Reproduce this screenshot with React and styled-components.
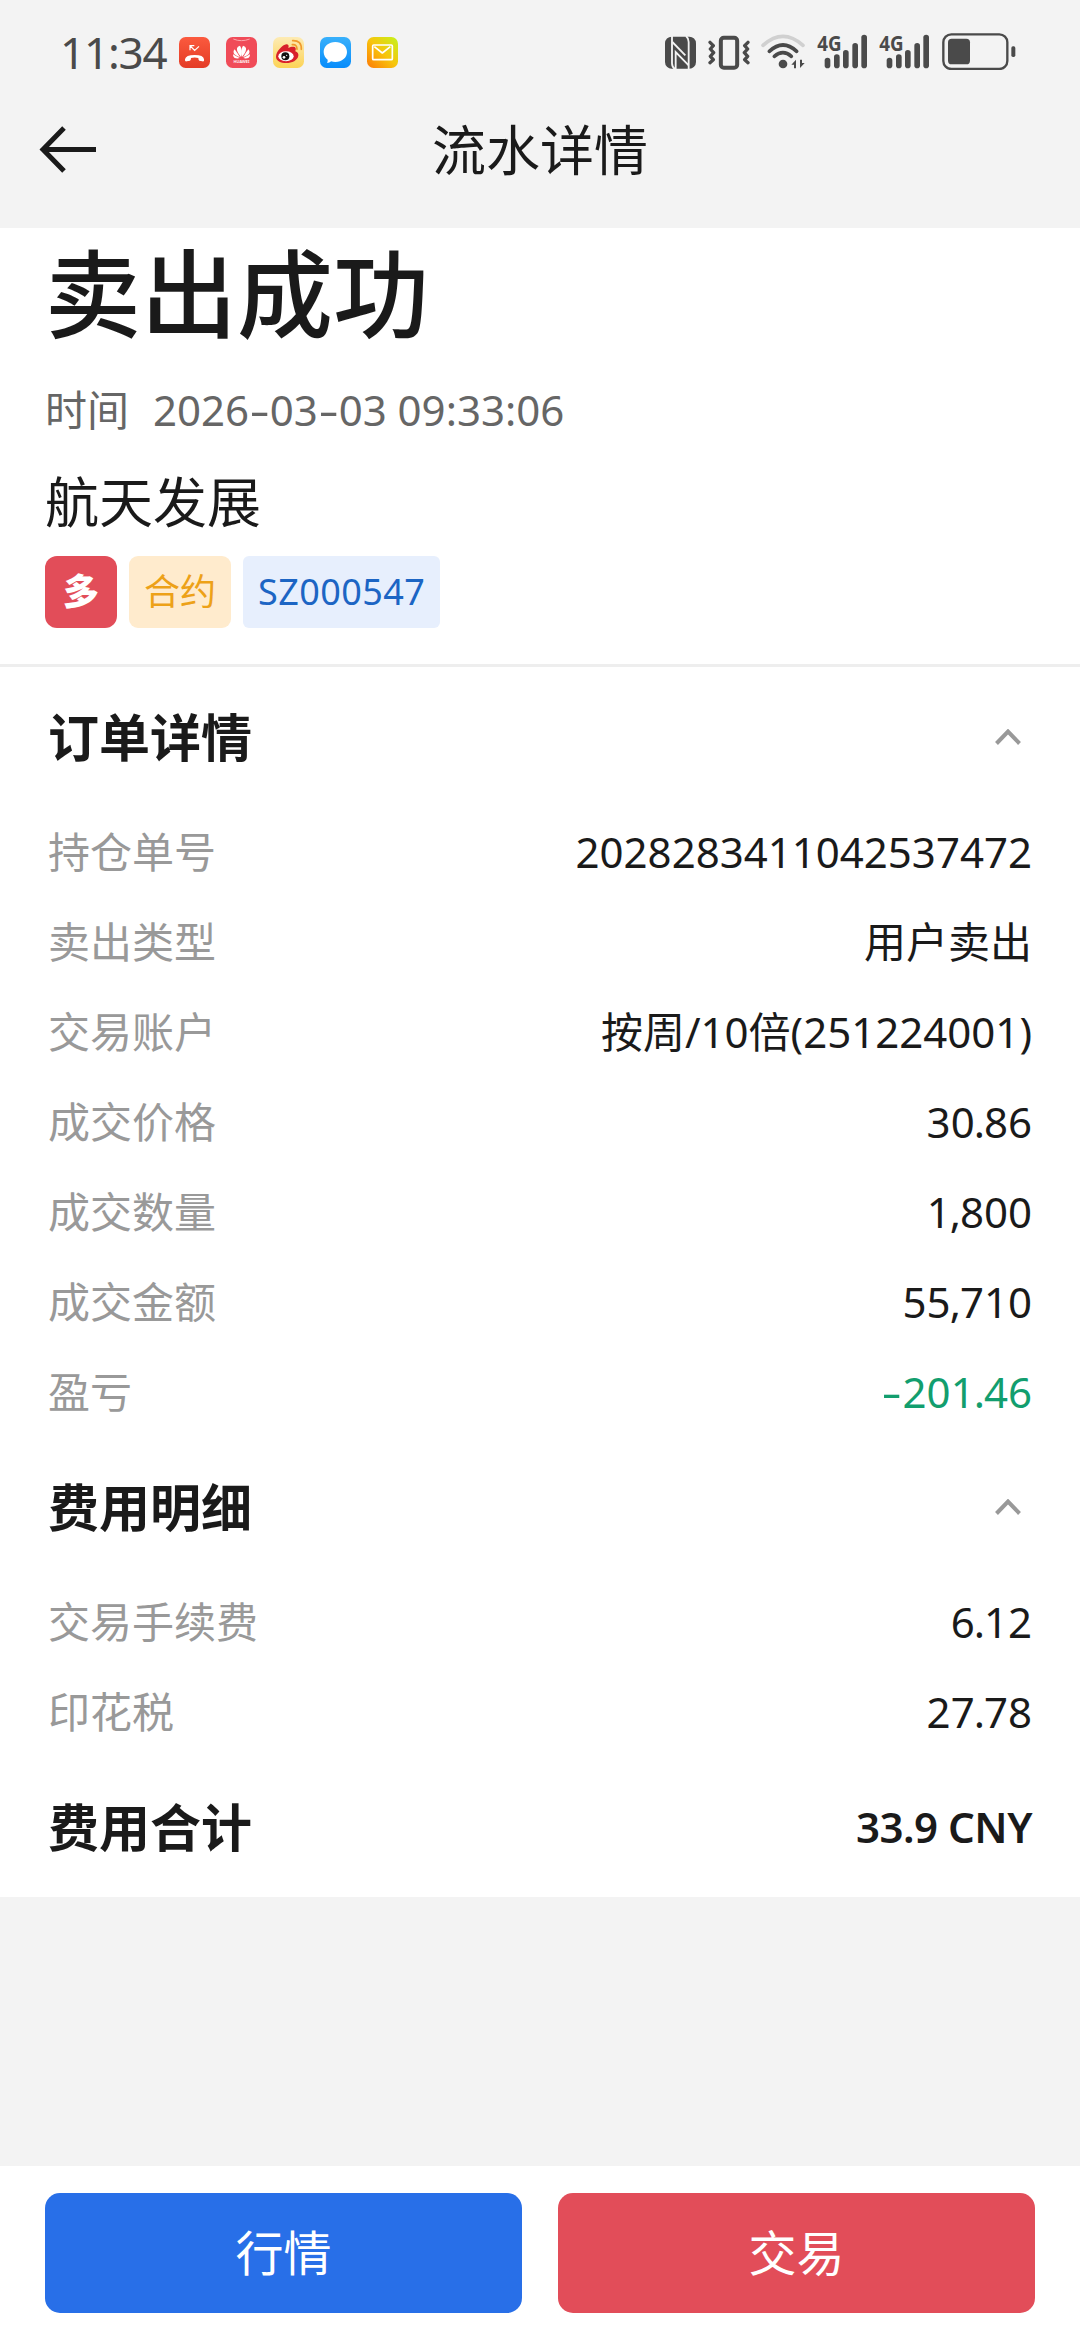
import React from "react";
import styled, { createGlobalStyle } from "styled-components";

const orderRows = [
  { label: "持仓单号", value: "2028283411042537472" },
  { label: "卖出类型", value: "用户卖出" },
  { label: "交易账户", value: "按周/10倍(251224001)" },
  { label: "成交价格", value: "30.86" },
  { label: "成交数量", value: "1,800" },
  { label: "成交金额", value: "55,710" },
  { label: "盈亏", value: "-201.46", color: "#129e6e" },
];

const feeRows = [
  { label: "交易手续费", value: "6.12" },
  { label: "印花税", value: "27.78" },
];

// wider hyphens and tighter points than Noto Sans has by default
const formatText = (text) =>
  text.split(/([-.,])/).map((part, i) => {
    if (part === "-") return <Dash key={i}>-</Dash>;
    if (part === "." || part === ",") return <Point key={i}>{part}</Point>;
    return part;
  });

const AppIcon = ({ x, children }) => (
  <svg width="31" height="38" viewBox={`${x} 36 93 114`}>
    {children}
  </svg>
);

const MissedCallIcon = () => (
  <AppIcon x={417}>
    <defs>
      <linearGradient id="call" x1="0" y1="0" x2="0" y2="1">
        <stop offset="0" stopColor="#fb5a3e" />
        <stop offset="1" stopColor="#e43c26" />
      </linearGradient>
    </defs>
    <rect x="417" y="51" width="93" height="93" rx="20" fill="url(#call)" />
    <path
      d="M450 91V77h13M451 78l13 13 13-12"
      fill="none"
      stroke="#fff"
      strokeWidth="3.5"
    />
    <path
      d="M435 118q2-13 29-13t28 13l0 4q-1 3-5 2l-9-2q-3-1-3-8-11-3-22 0 0 7-3 8l-10 2q-5 1-5-3z"
      fill="#fff"
    />
  </AppIcon>
);

const HuaweiIcon = () => (
  <AppIcon x={558}>
    <rect x="558" y="51" width="93" height="93" rx="20" fill="#f04b58" />
    <path
      d="M580 57q24 10 49 0"
      fill="none"
      stroke="#fba9ae"
      strokeWidth="3"
    />
    <g fill="#fff">
      <path d="M603 111q-14-16-12-26 1-6 9-8 9 14 3 34z" />
      <path d="M606 111q14-16 12-26-1-6-9-8-9 14-3 34z" />
      <path d="M600 112q-10-16-16-24-5 5-3 11 3 7 19 13z" />
      <path d="M609 112q10-16 16-24 5 5 3 11-3 7-19 13z" />
      <path d="M599 114q-12-6-20-11 0 11 9 12 6 1 11-1z" />
      <path d="M610 114q12-6 20-11 0 11-9 12-6 1-11-1z" />
      <text
        x="604.500"
        y="130"
        fontSize="12"
        fontWeight="600"
        textAnchor="middle"
      >
        HUAWEI
      </text>
    </g>
  </AppIcon>
);

const WeiboIcon = () => (
  <AppIcon x={699}>
    <defs>
      <linearGradient id="weibo" x1="0" y1="0" x2="0" y2="1">
        <stop offset="0" stopColor="#fdebb4" />
        <stop offset="1" stopColor="#fcd356" />
      </linearGradient>
    </defs>
    <rect x="699" y="51" width="93" height="93" rx="20" fill="url(#weibo)" />
    <path
      d="M708 110c0-15 20-36 31-37 7 0 8 5 6 11 8-4 20-6 22 1 1 4-1 7-1 9 7 2 10 7 9 13-2 14-19 22-36 22-17 0-31-7-31-19z"
      fill="#d8202a"
    />
    <ellipse cx="738" cy="109" rx="23" ry="15" fill="#fff" />
    <circle cx="736" cy="109" r="12" fill="#111" />
    <circle cx="732" cy="112" r="4" fill="#fff" />
    <circle cx="740" cy="106" r="2" fill="#fff" />
    <path
      d="M757 74q14-2 14 14M758 62q27-1 26 26"
      fill="none"
      stroke="#f09a2c"
      strokeWidth="5"
      strokeLinecap="round"
    />
  </AppIcon>
);

const MessageIcon = () => (
  <AppIcon x={840}>
    <defs>
      <linearGradient id="message" x1="0" y1="0" x2="0" y2="1">
        <stop offset="0" stopColor="#38b0fb" />
        <stop offset="1" stopColor="#078cfb" />
      </linearGradient>
    </defs>
    <rect x="840" y="51" width="93" height="93" rx="20" fill="url(#message)" />
    <path
      d="M886 66c20 0 35 13 35 30s-15 30-35 30c-5 0-9-1-13-2-3 3-7 5-12 5 2-3 2-7 2-10-7-5-12-13-12-23 0-17 15-30 35-30z"
      fill="#fff"
    />
  </AppIcon>
);

const MailIcon = () => (
  <AppIcon x={981}>
    <defs>
      <linearGradient id="mail" x1="0" y1="1" x2="1" y2="0">
        <stop offset="0" stopColor="#fd7a05" />
        <stop offset="0.5" stopColor="#f8c40c" />
        <stop offset="1" stopColor="#c3f41a" />
      </linearGradient>
    </defs>
    <rect x="981" y="51" width="93" height="93" rx="20" fill="url(#mail)" />
    <g fill="none" stroke="#fff" strokeWidth="5" strokeLinejoin="round">
      <rect x="998" y="75" width="59" height="44" rx="3" />
      <path d="M1003 80l24 19 24-19" />
    </g>
  </AppIcon>
);

const NfcIcon = () => (
  <svg width="31" height="38" viewBox="45 36 93 114">
    <rect x="45" y="50" width="93" height="96" rx="20" fill="#4a4a4a" />
    <g fill="none" stroke="#f3f3f3" strokeWidth="5.500">
      <path d="M66 48v82q0 11 9 18" />
      <path d="M116 148V66q0-11-8-18" />
      <path d="M67 66l39 40" />
      <path d="M77 148V96l39 40" />
    </g>
  </svg>
);

const VibrateIcon = () => (
  <svg width="42" height="38" viewBox="174 36 126 114">
    <rect
      x="212.500"
      y="53"
      width="49"
      height="90"
      rx="9"
      fill="none"
      stroke="#4a4a4a"
      strokeWidth="12"
    />
    <path
      d="M180 67l10 10-9 10 10 11-10 11 9 10-10 9M294 67l-10 10 9 10-10 11 10 11-9 10 10 9"
      fill="none"
      stroke="#4a4a4a"
      strokeWidth="10"
      strokeLinecap="round"
      strokeLinejoin="round"
    />
  </svg>
);

const WifiIcon = () => (
  <svg width="44" height="38" viewBox="336 36 132 114">
    <g fill="none" strokeWidth="11" strokeLinecap="round">
      <path d="M342 76q60-54 120 0" stroke="#d0d0d0" />
      <path d="M361 94q41-38 82 0" stroke="#4a4a4a" />
      <path d="M376 109q26-22 51 0" stroke="#4a4a4a" />
    </g>
    <circle cx="402" cy="132" r="13" fill="#4a4a4a" />
    <path
      d="M427 134l14-15v26h-6v-11zM467 129l-14 15v-25h6v10z"
      fill="#4a4a4a"
    />
  </svg>
);

const SignalIcon = () => (
  <svg width="51" height="50" viewBox="503 18 153 150">
    <text
      x="504"
      y="94"
      fontSize="66"
      fontWeight="700"
      fill="#4a4a4a"
      textLength="73"
      lengthAdjust="spacingAndGlyphs"
    >
      4G
    </text>
    <g stroke="#f3f3f3" strokeWidth="6" paintOrder="stroke" fill="#4a4a4a">
      <rect x="554" y="103" width="17" height="42" rx="8.500" />
      <rect x="581" y="90" width="17" height="55" rx="8.500" />
    </g>
    <g fill="#4a4a4a">
      <rect x="526" y="113" width="17" height="32" rx="8.500" />
      <rect x="609" y="69" width="17" height="76" rx="8.500" />
      <rect x="636" y="44" width="17" height="101" rx="8.500" />
    </g>
  </svg>
);

const BatteryIcon = () => (
  <svg width="74" height="38" viewBox="875 36 222 114">
    <rect
      x="879"
      y="43"
      width="192"
      height="104"
      rx="24"
      fill="none"
      stroke="#4a4a4a"
      strokeWidth="7"
    />
    <rect x="893" y="56" width="66" height="77" rx="11" fill="#4a4a4a" />
    <rect x="1083" y="79" width="12" height="32" rx="5" fill="#4a4a4a" />
  </svg>
);

const BackIcon = () => (
  <svg width="58" height="48" viewBox="0 0 58 48">
    <path
      d="M25 2L4 23.500l21 21.500M3 23.500h54"
      fill="none"
      stroke="#1a1a1a"
      strokeWidth="5"
    />
  </svg>
);

const Chevron = () => (
  <svg width="26" height="17" viewBox="0 0 26 17">
    <path
      d="M1.500 14.500L13 2.500l11.500 12"
      fill="none"
      stroke="#999"
      strokeWidth="4"
    />
  </svg>
);

const Rows = ({ rows }) =>
  rows.map(({ label, value, color }) => (
    <Row key={label}>
      <Label>{label}</Label>
      <Value $color={color}>{formatText(value)}</Value>
    </Row>
  ));

const App = () => {
  return (
    <Page>
      <GlobalStyle />
      <StatusBar>
        <StatusLeft>
          <Clock>11:34</Clock>
          <MissedCallIcon />
          <HuaweiIcon />
          <WeiboIcon />
          <MessageIcon />
          <MailIcon />
        </StatusLeft>
        <StatusRight>
          <NfcIcon />
          <VibrateIcon />
          <WifiIcon />
          <SignalIcon />
          <SignalIcon />
          <BatteryIcon />
        </StatusRight>
      </StatusBar>
      <NavBar>
        <BackIcon />
        <NavTitle>流水详情</NavTitle>
      </NavBar>

      <Summary>
        <Result>卖出成功</Result>
        <TimeRow>
          <span>时间</span>
          <span>{formatText("2026-03-03 09:33:06")}</span>
        </TimeRow>
        <StockName>航天发展</StockName>
        <Tags>
          <Tag $bg="#e24d59" $color="#fff" $radius={12} $bold>
            多
          </Tag>
          <Tag $bg="#ffebcd" $color="#eda118" $radius={9}>
            合约
          </Tag>
          <Tag $bg="#e7effd" $color="#1c65c4" $radius={6} $spacing={0.4}>
            SZ000547
          </Tag>
        </Tags>
      </Summary>

      <Details>
        <SectionHead>
          <SectionTitle>订单详情</SectionTitle>
          <Chevron />
        </SectionHead>
        <Rows rows={orderRows} />
        <SectionHead>
          <SectionTitle>费用明细</SectionTitle>
          <Chevron />
        </SectionHead>
        <Rows rows={feeRows} />
        <TotalRow>
          <SectionTitle>费用合计</SectionTitle>
          <TotalValue>33.9 CNY</TotalValue>
        </TotalRow>
      </Details>

      <Footer>
        <ActionButton $bg="#286fe8">行情</ActionButton>
        <ActionButton $bg="#e24d59">交易</ActionButton>
      </Footer>
    </Page>
  );
};

const GlobalStyle = createGlobalStyle`
  * {
    box-sizing: border-box;
  }
  body {
    margin: 0;
    font-family: "Noto Sans", "Noto Sans CJK SC", sans-serif;
    color: #1a1a1a;
  }
  svg {
    display: block;
    flex-shrink: 0;
  }
`;

const Page = styled.div`
  display: flex;
  flex-direction: column;
  width: 1080px;
  height: 2340px;
  background: #f3f3f3;
`;

const StatusBar = styled.div`
  display: flex;
  justify-content: space-between;
  align-items: center;
  height: 102px;
  padding: 0 64px 0 60px;
`;
const StatusLeft = styled.div`
  display: flex;
  align-items: center;
  gap: 16px;
`;
const StatusRight = styled.div`
  display: flex;
  align-items: center;
  gap: 11.600px;
`;
const Clock = styled.span`
  width: 103px;
  padding-top: 2px;
  font-size: 44px;
  line-height: 60px;
  letter-spacing: -1.2px;
  color: #4a4a4a;
`;

const NavBar = styled.div`
  display: grid;
  grid-template-columns: 58px 1fr 58px;
  align-items: center;
  height: 126px;
  padding: 0 39px 30px;
`;
const NavTitle = styled.h1`
  margin: 0;
  font-size: 54px;
  font-weight: 400;
  line-height: 80px;
  text-align: center;
`;

const Summary = styled.div`
  display: flex;
  flex-direction: column;
  height: 439px;
  padding: 0 45px;
  background: #fff;
  border-bottom: 3px solid #eee;
`;
const Result = styled.div`
  font-size: 96px;
  font-weight: 500;
  line-height: 130px;
`;
const TimeRow = styled.div`
  display: flex;
  gap: 24px;
  margin-top: 22px;
  font-size: 42px;
  line-height: 60px;
  color: #666;
`;
const StockName = styled.div`
  margin-top: 26px;
  font-size: 54px;
  line-height: 72px;
`;
const Tags = styled.div`
  display: flex;
  gap: 12px;
  margin-top: 18px;
`;
const Tag = styled.span`
  display: flex;
  justify-content: center;
  min-width: 72px;
  padding: 0 15px;
  font-size: 36px;
  font-weight: ${({ $bold }) => ($bold ? 900 : 400)};
  line-height: 72px;
  letter-spacing: ${({ $spacing }) => $spacing || 0}px;
  color: ${({ $color }) => $color};
  background: ${({ $bg }) => $bg};
  border-radius: ${({ $radius }) => $radius}px;
`;

const Details = styled.div`
  padding: 0 48px;
  background: #fff;
`;
const SectionHead = styled.div`
  display: flex;
  align-items: center;
  justify-content: space-between;
  height: 140px;
  padding-right: 11px;
`;
const SectionTitle = styled.span`
  font-size: 51px;
  font-weight: 700;
  line-height: 70px;
`;
const Row = styled.div`
  display: flex;
  align-items: center;
  justify-content: space-between;
  height: 90px;
  font-size: 42px;
  line-height: 60px;
`;
const Label = styled.span`
  color: #999;
`;
const Value = styled.span`
  color: ${({ $color }) => $color || "#1a1a1a"};
`;
const Dash = styled.span`
  display: inline-block;
  margin: 0 3.600px;
  transform: scaleX(1.5);
`;
const Point = styled.span`
  margin: 0 -1px;
`;
const TotalRow = styled(Row)`
  height: 140px;
`;
const TotalValue = styled.span`
  font-weight: 600;
  letter-spacing: -0.5px;
`;

const Footer = styled.div`
  display: flex;
  gap: 36px;
  height: 174px;
  margin-top: auto;
  padding: 27px 45px;
  background: #fff;
`;
const ActionButton = styled.button`
  flex: 1;
  border: none;
  border-radius: 15px;
  font-family: inherit;
  font-size: 48px;
  line-height: 60px;
  color: #fff;
  background: ${({ $bg }) => $bg};
`;

export default App;
